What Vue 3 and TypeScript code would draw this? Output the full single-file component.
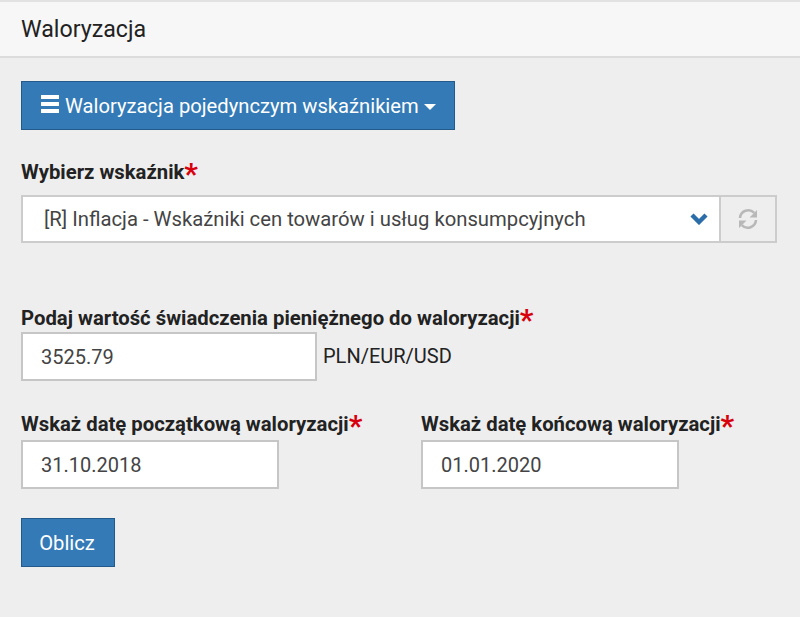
<script setup lang="ts">
import { ref } from 'vue'

const amount = ref('3525.79')
const dateFrom = ref('31.10.2018')
const dateTo = ref('01.01.2020')
</script>

<template>
  <div class="panel">
    <div class="panel__heading">Waloryzacja</div>
    <div class="panel__body">
      <button class="btn btn--menu" type="button">
        <svg class="bars" viewBox="0 0 18 18" width="18" height="18">
          <path d="M0 0h18v4H0zM0 7h18v4H0zM0 14h18v4H0z" fill="#fff" />
        </svg>
        <span>Waloryzacja pojedynczym wskaźnikiem</span>
        <i class="caret"></i>
      </button>

      <label class="field-label field-label--select">Wybierz wskaźnik<em>*</em></label>
      <div class="select-row">
        <div class="select">
          <span>[R] Inflacja - Wskaźniki cen towarów i usług konsumpcyjnych</span>
          <svg viewBox="0 0 18 12" width="18" height="12">
            <path d="M2 2l7 7 7-7" fill="none" stroke="#2a6da8" stroke-width="4.4" />
          </svg>
        </div>
        <div class="refresh">
          <svg viewBox="0 0 22 24" width="22" height="24">
            <path d="M3 11a8.300 8.300 0 0 1 14.200-5.200M19 13a8.300 8.300 0 0 1-14.200 5.200" fill="none" stroke="#b8b8b8" stroke-width="2.600" />
            <path d="M20 3v7.500H12.500zM2 21v-7.500H9.500z" fill="#b8b8b8" />
          </svg>
        </div>
      </div>

      <label class="field-label field-label--amount">Podaj wartość świadczenia pieniężnego do waloryzacji<em>*</em></label>
      <div class="amount-row">
        <input v-model="amount" class="input input--amount" type="text" />
        <span class="unit">PLN/EUR/USD</span>
      </div>

      <div class="dates">
        <div class="dates__col">
          <label class="field-label">Wskaż datę początkową waloryzacji<em>*</em></label>
          <input v-model="dateFrom" class="input input--date" type="text" />
        </div>
        <div class="dates__col">
          <label class="field-label">Wskaż datę końcową waloryzacji<em>*</em></label>
          <input v-model="dateTo" class="input input--date" type="text" />
        </div>
      </div>

      <button class="btn btn--submit" type="button">Oblicz</button>
    </div>
  </div>
</template>

<style>
html, body {
  background: #eeeeee;
}
</style>

<style scoped>
.panel {
  height: 617px;
  box-sizing: border-box;
  border-top: 2px solid #e2e2e2;
  background: #eeeeee;
  font-family: Roboto, "Liberation Sans", sans-serif;
  color: #222;
}

.panel__heading {
  height: 56px;
  box-sizing: border-box;
  padding: 14px 21px 0;
  background: #f7f7f7;
  border-bottom: 2px solid #dcdcdc;
  font-size: 23.2px;
  line-height: 27px;
}

.panel__body {
  padding: 23px 23px 0 21px;
}

.btn {
  display: flex;
  align-items: center;
  box-sizing: border-box;
  border: 1px solid #225a8c;
  background: #337ab7;
  color: #fff;
  font-family: inherit;
  font-size: 20.2px;
}

.btn--menu {
  width: 434px;
  height: 49px;
  padding: 0 0 0 19px;
}

.bars {
  margin-right: 6px;
  margin-top: -3px;
}

.caret {
  margin-left: 5px;
  margin-top: 2px;
  border-top: 6px solid #fff;
  border-left: 6px solid transparent;
  border-right: 6px solid transparent;
}

.field-label {
  display: block;
  font-size: 20.3px;
  font-weight: 700;
  line-height: 24px;
  color: #222;
}

.field-label em {
  color: #d8000c;
  font-style: normal;
  font-size: 30px;
  line-height: 0;
  vertical-align: -5px;
}

.field-label--select {
  margin-top: 30px;
}

.select-row {
  display: flex;
  height: 48px;
  margin-top: 11px;
}

.select {
  flex: 1;
  display: flex;
  align-items: center;
  justify-content: space-between;
  box-sizing: border-box;
  padding: 0 11px 0 21px;
  background: #fff;
  border: 2px solid #cccccc;
  border-right-width: 1px;
  font-size: 20.25px;
  color: #444;
}

.refresh {
  width: 57px;
  display: flex;
  align-items: center;
  justify-content: center;
  box-sizing: border-box;
  border: 2px solid #cccccc;
  border-left-width: 1px;
  background: #eeeeee;
}

.field-label--amount {
  margin-top: 63px;
}

.amount-row {
  display: flex;
  margin-top: 2px;
}

.input {
  display: block;
  box-sizing: border-box;
  height: 49px;
  padding: 0 18px;
  background: #fff;
  border: 2px solid #c6c6c6;
  border-radius: 0;
  outline: none;
  font-family: inherit;
  font-size: 20px;
  color: #444;
}

.input--amount {
  width: 296px;
}

.input--date {
  width: 258px;
  margin-top: 4px;
}

.unit {
  margin-left: 6px;
  padding-top: 12px;
  font-size: 20px;
  line-height: 24px;
}

.dates {
  display: flex;
  margin-top: 31px;
}

.dates__col {
  flex: none;
  width: 400px;
}

.btn--submit {
  justify-content: center;
  width: 94px;
  height: 49px;
  margin-top: 29px;
  padding: 0 2px 0 0;
}
</style>
